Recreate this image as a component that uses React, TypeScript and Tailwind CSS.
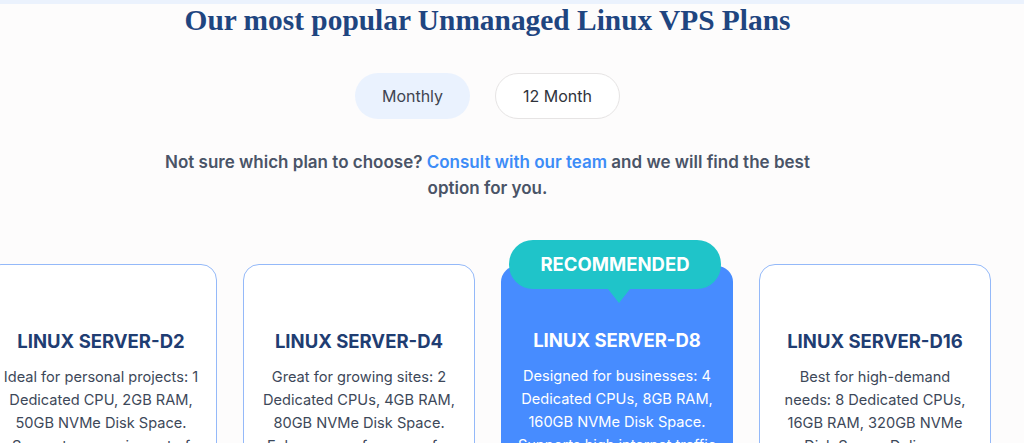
import React from 'react';

type Plan = {
  name: string;
  desc: string;
  featured?: boolean;
};

const plans: Plan[] = [
  {
    name: 'LINUX SERVER-D2',
    desc: 'Ideal for personal projects: 1 Dedicated CPU, 2GB RAM, 50GB NVMe Disk Space. Supports a growing set of small websites and apps.',
  },
  {
    name: 'LINUX SERVER-D4',
    desc: 'Great for growing sites: 2 Dedicated CPUs, 4GB RAM, 80GB NVMe Disk Space. Enhances performance for your applications.',
  },
  {
    name: 'LINUX SERVER-D8',
    desc: 'Designed for businesses: 4 Dedicated CPUs, 8GB RAM, 160GB NVMe Disk Space. Supports high internet traffic and demanding workloads.',
    featured: true,
  },
  {
    name: 'LINUX SERVER-D16',
    desc: 'Best for high-demand needs: 8 Dedicated CPUs, 16GB RAM, 320GB NVMe Disk Space. Delivers maximum power for large projects.',
  },
];

function PlanCard({ plan }: { plan: Plan }) {
  if (plan.featured) {
    return (
      <div className="relative w-[232px] shrink-0 mt-[2px] rounded-[16px] bg-[#478cff] px-4 pt-[62px] pb-6 text-center">
        <div className="absolute left-[8px] top-[-26px] w-[212px]">
          <div className="flex h-[49px] items-center justify-center rounded-[24px] bg-[#1fc4c9] text-[18.5px] font-bold text-white">
            RECOMMENDED
          </div>
          <div className="mx-auto h-0 w-0 border-x-[11px] border-t-[14px] border-x-transparent border-t-[#1fc4c9] translate-x-[4px]" />
        </div>
        <h3 className="text-[18.5px] font-bold leading-[24px] text-white">{plan.name}</h3>
        <p className="mt-[13px] text-[14.6px] leading-[23px] text-white">{plan.desc}</p>
      </div>
    );
  }
  return (
    <div className="w-[232px] shrink-0 rounded-[16px] border border-[#94b9f9] bg-white px-4 pt-[64px] pb-6 text-center">
      <h3 className="text-[18.5px] font-bold leading-[24px] text-[#1f3d72]">{plan.name}</h3>
      <p className="mt-[13px] text-[14.6px] leading-[23px] text-[#3d4859]">{plan.desc}</p>
    </div>
  );
}

export default function App() {
  return (
    <div className="h-[443px] w-full overflow-hidden bg-[#fdfcfc]" style={{ fontFamily: 'Inter, "Noto Sans", sans-serif' }}>
      <div className="h-[4px] bg-[#ebf2fd]" />
      <div className="w-[975px]">
        <h2
          className="pt-[1px] text-center text-[29.4px] font-bold leading-[30px] text-[#1f4580]"
          style={{ fontFamily: '"Liberation Serif", serif' }}
        >
          Our most popular Unmanaged Linux VPS Plans
        </h2>

        <div className="mt-[38px] flex justify-center gap-[25px]">
          <button className="h-[46px] w-[115px] rounded-full bg-[#eaf2fe] text-[16px] text-[#3f4450]">Monthly</button>
          <button className="h-[46px] w-[125px] rounded-full border border-[#e6e4e4] bg-white text-[16px] text-[#2f333b]">
            12 Month
          </button>
        </div>

        <p className="mx-auto mt-[30px] w-[680px] text-center text-[17px] font-semibold leading-[26px] text-[#4a5467]">
          Not sure which plan to choose? <span className="text-[#3d8cf7]">Consult with our team</span> and we will find the best option for you.
        </p>

        <div className="ml-[-15px] mt-[63px] flex items-start gap-[26px]">
          {plans.map((p) => (
            <PlanCard key={p.name} plan={p} />
          ))}
        </div>
      </div>
    </div>
  );
}
